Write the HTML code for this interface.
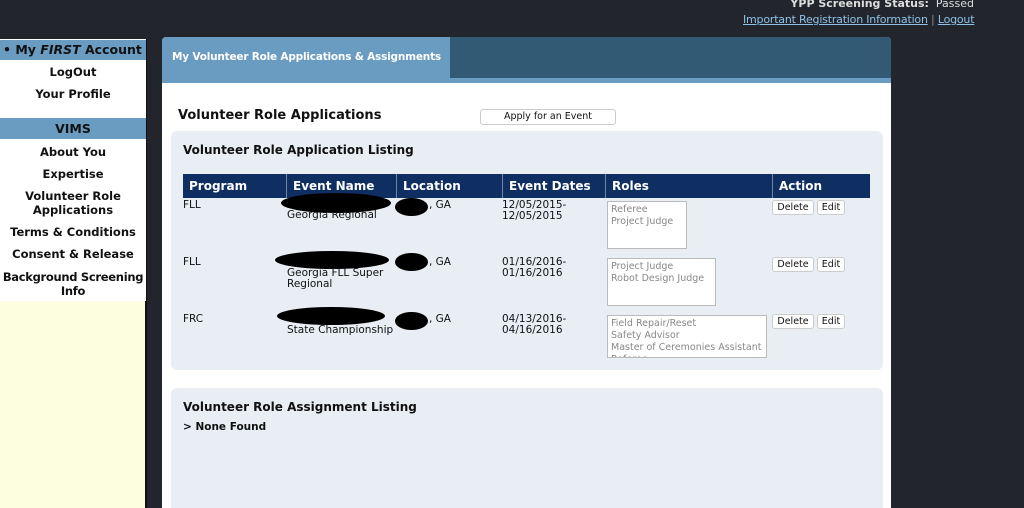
<!DOCTYPE html>
<html><head><style>
*{margin:0;padding:0;box-sizing:border-box}
body{width:1024px;height:508px;background:#22262c;font-family:"DejaVu Sans","Liberation Sans",sans-serif;position:relative;overflow:hidden;font-size:11px;color:#111}
.a{position:absolute}
.side{left:0;top:39px;width:147px;height:469px;background:#fdfddf;border-right:2px solid #111}
.sh{position:absolute;left:0;width:146px;background:#6a9bc0;font-weight:bold;font-size:12.5px;color:#111;text-align:center;white-space:nowrap}
.si{position:absolute;left:-10px;width:166px;text-align:center;font-weight:bold;font-size:11.5px;line-height:14px;white-space:nowrap}
.th{position:absolute;top:0;height:24px;line-height:24px;color:#fff;font-weight:bold;font-size:12px;border-left:1px solid #6d86a8;padding-left:6px}
.c{position:absolute;font-size:10.5px;line-height:11px;color:#111;white-space:nowrap}
.blob{position:absolute;background:#000;border-radius:50%}
.box{position:absolute;background:#fff;border:1px solid #bbb;font-size:9.5px;color:#888;line-height:12px;padding:2px 3px;overflow:hidden;white-space:nowrap}
.btn{position:absolute;background:#fff;border:1px solid #ccc;border-radius:3px;font-size:9.5px;height:15px;line-height:13px;text-align:center}
</style></head><body>
<div class="a" style="right:50px;top:-3px;font-size:11px;color:#ddd"><b>YPP Screening Status:</b>&nbsp; Passed</div>
<div class="a" style="left:743px;top:13px;font-size:11px;color:#8fc0e8;white-space:nowrap;letter-spacing:-0.2px"><u>Important Registration Information</u> <span style="color:#888">|</span> <u>Logout</u></div>

<div class="a side">
<div class="a" style="left:0;top:0;width:146px;height:262px;background:#fff"></div>
<div class="sh" style="top:1px;height:20px;line-height:20px;text-align:left;padding-left:3px">• My <i>FIRST</i> Account</div>
<div class="si" style="top:26px">LogOut</div>
<div class="si" style="top:48px">Your Profile</div>
<div class="sh" style="top:79px;height:21px;line-height:21px">VIMS</div>
<div class="si" style="top:106px">About You</div>
<div class="si" style="top:128px">Expertise</div>
<div class="si" style="top:150px">Volunteer Role<br>Applications</div>
<div class="si" style="top:186px">Terms &amp; Conditions</div>
<div class="si" style="top:208px">Consent &amp; Release</div>
<div class="si" style="top:231px;letter-spacing:-0.3px">Background Screening<br>Info</div>
</div>

<div class="a" style="left:162px;top:37px;width:729px;height:471px;background:#fff;border-radius:4px 4px 0 0;overflow:hidden">
<div class="a" style="left:0;top:0;width:729px;height:41px;background:#325a74"></div>
<div class="a" style="left:0;top:41px;width:729px;height:5px;background:#6a9bc0"></div>
<div class="a" style="left:0;top:0;width:288px;height:46px;background:#6a9bc0;color:#fff;font-weight:bold;font-size:10.5px;line-height:40px;padding-left:10px;white-space:nowrap;letter-spacing:-0.2px">My Volunteer Role Applications &amp; Assignments</div>
<div class="a" style="left:16px;top:71px;font-weight:bold;font-size:13px">Volunteer Role Applications</div>
<div class="btn" style="left:318px;top:72px;width:136px;height:16px;font-size:9.5px">Apply for an Event</div>

<div class="a" style="left:9px;top:94px;width:712px;height:239px;background:#e8eef3;border-radius:6px">
<div class="a" style="left:12px;top:12px;font-weight:bold;font-size:12px">Volunteer Role Application Listing</div>
<div class="a" style="left:12px;top:43px;width:687px;height:24px;background:#0f2f62">
<div class="th" style="left:0;border:none">Program</div>
<div class="th" style="left:103px">Event Name</div>
<div class="th" style="left:213px">Location</div>
<div class="th" style="left:319px">Event Dates</div>
<div class="th" style="left:422px">Roles</div>
<div class="th" style="left:589px">Action</div>
</div>
<div class="c" style="left:12px;top:69px">FLL</div>
<div class="c" style="left:116px;top:79px">Georgia Regional</div>
<div class="blob" style="left:110px;top:62px;width:110px;height:20px"></div>
<div class="blob" style="left:224px;top:67px;width:33px;height:18px"></div>
<div class="c" style="left:258px;top:69px">, GA</div>
<div class="c" style="left:331px;top:69px">12/05/2015-<br>12/05/2015</div>
<div class="box" style="left:436px;top:70px;width:80px;height:48px">Referee<br>Project Judge</div>
<div class="btn" style="left:601px;top:69px;width:42px">Delete</div>
<div class="btn" style="left:646px;top:69px;width:28px">Edit</div>
<div class="c" style="left:12px;top:126px">FLL</div>
<div class="blob" style="left:104px;top:120px;width:114px;height:18px"></div>
<div class="blob" style="left:224px;top:122px;width:33px;height:18px"></div>
<div class="c" style="left:258px;top:126px">, GA</div>
<div class="c" style="left:116px;top:137px">Georgia FLL Super<br>Regional</div>
<div class="c" style="left:331px;top:126px">01/16/2016-<br>01/16/2016</div>
<div class="box" style="left:436px;top:127px;width:109px;height:48px">Project Judge<br>Robot Design Judge</div>
<div class="btn" style="left:601px;top:126px;width:42px">Delete</div>
<div class="btn" style="left:646px;top:126px;width:28px">Edit</div>
<div class="c" style="left:12px;top:183px">FRC</div>
<div class="blob" style="left:106px;top:176px;width:108px;height:18px"></div>
<div class="blob" style="left:224px;top:181px;width:33px;height:18px"></div>
<div class="c" style="left:258px;top:183px">, GA</div>
<div class="c" style="left:116px;top:194px">State Championship</div>
<div class="c" style="left:331px;top:183px">04/13/2016-<br>04/16/2016</div>
<div class="box" style="left:436px;top:184px;width:160px;height:43px">Field Repair/Reset<br>Safety Advisor<br>Master of Ceremonies Assistant<br>Referee</div>
<div class="btn" style="left:601px;top:183px;width:42px">Delete</div>
<div class="btn" style="left:646px;top:183px;width:28px">Edit</div>
</div>

<div class="a" style="left:9px;top:351px;width:712px;height:140px;background:#e8eef3;border-radius:6px">
<div class="a" style="left:12px;top:12px;font-weight:bold;font-size:12px">Volunteer Role Assignment Listing</div>
<div class="a" style="left:12px;top:33px;font-weight:bold;font-size:10.5px">&gt; None Found</div>
</div>
</div>
</body></html>
